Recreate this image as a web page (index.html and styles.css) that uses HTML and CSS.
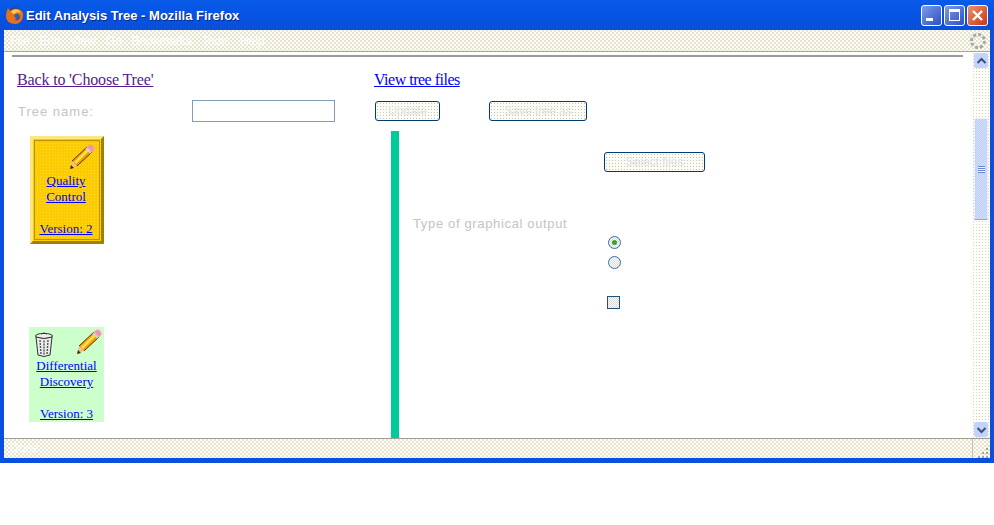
FILE: index.html
```html
<!DOCTYPE html>
<html>
<head>
	<title>Edit Analysis Tree - Mozilla Firefox</title>
	<link rel="stylesheet" href="styles.css">
</head>
<body>
	<svg width="0" height="0" class="defs">
		<symbol id="pencil" viewBox="0 0 26 26">
			<path d="M1 25l2-8 5 5z" fill="#e8c48e"/>
			<path d="M1 25l1-4 3 3z" fill="#4a2808"/>
			<path d="M3 17L18 3l5 5L8 22z" fill="#f59a10"/>
			<path d="M5 18L19 4l2 2L7 20z" fill="#ffe040"/>
			<path d="M3 17L18 3M8 22L23 8" stroke="#5a3404" stroke-width="1" fill="none"/>
			<path d="M18 3l2-2q2-1 3 0l2 2q1 2 0 3l-2 2z" fill="#f590b8"/>
			<path d="M17 4l5 5" stroke="#d0d0d0" stroke-width="2"/>
		</symbol>
	</svg>
	<div class="window">
		<div class="titlebar">
			<svg class="fox" width="18" height="18" viewBox="0 0 18 18">
				<circle cx="9" cy="9" r="8.500" fill="#2b4a94"/>
				<path d="M2 2c1 2 2 3 4 3 3-3 9-3 11 2 1 5-2 11-8 11-5 0-9-3-9-8 0-3 1-6 2-8z" fill="#e8701a"/>
				<path d="M5 5c3-3 9-2 10 2-2-1-5-1-6 1-2 0-4-1-4-3z" fill="#fbc840"/>
				<path d="M9 8c2-1 5 0 5 3s-3 4-5 3c1-1 1-2 0-3-1 0-1-2 0-3z" fill="#3a5ba8"/>
			</svg>
			<span class="title-text">Edit Analysis Tree - Mozilla Firefox</span>
			<div class="win-buttons">
				<div class="win-btn"><span class="min-glyph"></span></div>
				<div class="win-btn"><span class="max-glyph"></span></div>
				<div class="win-btn close">
					<svg width="13" height="13" viewBox="0 0 13 13"><path d="M2 2l9 9M11 2l-9 9" stroke="#fff" stroke-width="2.400"/></svg>
				</div>
			</div>
		</div>
		<div class="inner">
			<div class="menubar">
				<span>File</span><span>Edit</span><span>View</span><span>Go</span><span>Bookmarks</span><span>Tools</span><span>Help</span>
				<svg class="throbber" width="18" height="18" viewBox="0 0 18 18"><circle cx="9" cy="9" r="6.500" fill="none" stroke="#a8a8a8" stroke-width="3" stroke-dasharray="3 2"/></svg>
			</div>
			<div class="viewport">
				<div class="page">
					<hr class="rule">
					<div class="links-row">
						<a class="visited" href="#">Back to 'Choose Tree'</a>
						<a class="files" href="#">View tree files</a>
					</div>
					<div class="form-row">
						<label class="dim name-label">Tree name:</label>
						<input class="name-input" type="text">
						<button class="btn btn-update">Update</button>
						<button class="btn btn-copy">Save tree as</button>
					</div>
					<div class="lower">
						<div class="trees">
							<div class="card card-yellow">
								<div class="card-icons"><svg class="icon-pencil"><use href="#pencil"/></svg></div>
								<a href="#">Quality</a><br>
								<a href="#">Control</a>
								<div class="version"><a href="#">Version: 2</a></div>
							</div>
							<div class="card card-green">
								<div class="card-icons">
									<svg class="icon-trash" width="20" height="26" viewBox="0 0 20 26">
										<ellipse cx="10" cy="4" rx="8.500" ry="2.600" fill="#eee" stroke="#333"/>
										<path d="M7 2q3-2 6 0" fill="none" stroke="#333"/>
										<path d="M2 5l2 18q6 3 12 0l2-18q-8 3-16 0z" fill="#eaeaea" stroke="#333"/>
										<path d="M6 8l1 15M10 8.500v15M14 8l-1 15" stroke="#555" stroke-width="1.400" stroke-dasharray="2 1"/>
									</svg>
									<svg class="icon-pencil"><use href="#pencil"/></svg>
								</div>
								<a href="#">Differential</a><br>
								<a href="#">Discovery</a>
								<div class="version"><a href="#">Version: 3</a></div>
							</div>
						</div>
						<div class="divider"></div>
						<div class="options">
							<div class="opt-label dim">Type of graphical output</div>
							<div class="opt-controls">
								<button class="btn btn-select">Select files</button>
								<span class="radio checked"></span>
								<span class="radio"></span>
								<span class="check"></span>
							</div>
						</div>
					</div>
				</div>
				<div class="scrollbar">
					<div class="sb-btn"><svg width="11" height="8" viewBox="0 0 11 8"><path d="M1.500 6l4-4 4 4" fill="none" stroke="#3d4f78" stroke-width="2"/></svg></div>
					<div class="sb-track">
						<div class="sb-thumb"><span class="grip"></span></div>
					</div>
					<div class="sb-btn"><svg width="11" height="8" viewBox="0 0 11 8"><path d="M1.500 2l4 4 4-4" fill="none" stroke="#3d4f78" stroke-width="2"/></svg></div>
				</div>
			</div>
			<div class="statusbar">
				<span class="status-text">Done</span>
				<span class="status-grip"></span>
			</div>
		</div>
	</div>
</body>
</html>
```

FILE: styles.css
```css
body {
	margin: 0;
	background-color: #fff;
	font-family: "Liberation Serif", serif;
}

.defs {
	display: block;
	height: 0;
}

a {
	color: #0000ff;
}

a.visited {
	color: #551a8b;
}

.dim {
	color: #c4c4c4;
	font-family: "Liberation Sans", sans-serif;
	font-size: 13px;
}

/* window frame */
.window {
	width: 994px;
	height: 463px;
	display: flex;
	flex-direction: column;
	background-color: #0a4fe0;
	box-sizing: border-box;
	padding: 0 4px 5px 4px;
	border-radius: 6px 6px 0 0;
}

.titlebar {
	height: 30px;
	flex: none;
	display: flex;
	align-items: center;
	margin: 0 -4px;
	padding: 0 3px 0 6px;
	background: linear-gradient(#0a5be8, #0553e4 50%, #0a4fd8);
}

.fox {
	margin-right: 2px;
}

.title-text {
	color: #fff;
	font-family: "Liberation Sans", sans-serif;
	font-weight: bold;
	font-size: 13px;
	text-shadow: 1px 1px 0 #0a2a80;
}

.win-buttons {
	margin-left: auto;
	display: flex;
	gap: 2px;
	padding-right: 3px;
}

.win-btn {
	width: 19px;
	height: 19px;
	border: 1px solid #fff;
	border-radius: 3px;
	background: linear-gradient(135deg, #7f9be8, #2a50c8);
	display: flex;
	align-items: center;
	justify-content: center;
}

.win-btn.close {
	background: linear-gradient(135deg, #f09070, #c83810);
}

.min-glyph {
	width: 7px;
	height: 3px;
	background-color: #fff;
	margin: 8px 5px 0 0;
}

.max-glyph {
	width: 9px;
	height: 8px;
	border: 1px solid #fff;
	border-top-width: 3px;
}

.inner {
	flex: 1;
	min-height: 0;
	display: flex;
	flex-direction: column;
}

/* dithered chrome, the reference is a low colour capture */
.menubar {
	height: 22px;
	flex: none;
	display: flex;
	align-items: center;
	gap: 10px;
	padding-left: 6px;
	background: repeating-conic-gradient(#e6e3d0 0 25%, #fdfcf6 0 50%) 0 0 / 4px 4px;
	color: #fff;
	font-family: "Liberation Sans", sans-serif;
	font-size: 12px;
	border-bottom: 1px solid #a8a69a;
	box-sizing: border-box;
}

.throbber {
	margin-left: auto;
	margin-right: 3px;
}

.viewport {
	flex: 1;
	min-height: 0;
	display: flex;
	background-color: #fff;
}

.page {
	flex: 1;
	min-width: 0;
	display: flex;
	flex-direction: column;
	overflow: hidden;
}

.rule {
	flex: none;
	margin: 3px 9px 0 8px;
	height: 2px;
	border: 0;
	background-color: #9a9a9a;
}

.links-row {
	flex: none;
	display: flex;
	margin-top: 14px;
	padding-left: 13px;
	font-size: 16px;
	line-height: 18px;
	white-space: nowrap;
}

.links-row .visited {
	width: 357px;
	flex: none;
	letter-spacing: -0.15px;
}

.links-row .files {
	letter-spacing: -0.5px;
}

.form-row {
	flex: none;
	display: flex;
	align-items: center;
	margin-top: 11px;
	height: 22px;
	padding-left: 14px;
}

.name-label {
	width: 174px;
	flex: none;
	letter-spacing: 1px;
}

.name-input {
	width: 143px;
	height: 22px;
	box-sizing: border-box;
	border: 1px solid #7f9db9;
	background-color: #fff;
	padding: 0;
}

.btn {
	height: 20px;
	box-sizing: border-box;
	border: 1px solid #003c74;
	border-radius: 3px;
	background: #fdfcf4 radial-gradient(#c6c6c0 0.7px, transparent 0.9px) 0 0 / 3px 3px;
	color: #e2e2e2;
	font-family: "Liberation Sans", sans-serif;
	font-size: 12px;
	padding: 0;
	white-space: nowrap;
	overflow: hidden;
}

.btn-update {
	width: 65px;
	margin-left: 40px;
}

.btn-copy {
	width: 98px;
	margin-left: 49px;
}

.lower {
	flex: 1;
	min-height: 0;
	margin-top: 9px;
	display: flex;
}

.trees {
	width: 387px;
	flex: none;
	padding: 5px 0 0 25px;
	box-sizing: border-box;
}

.card {
	width: 75px;
	box-sizing: border-box;
	text-align: center;
	font-size: 13px;
	line-height: 16px;
}

.card-yellow {
	height: 108px;
	margin-left: 1px;
	width: 74px;
	background: #fccc00 radial-gradient(#ffdc3a 0.7px, transparent 0.9px) 0 0 / 3px 3px;
	border: 3px solid;
	border-color: #ffe680 #a08000 #a08000 #ffe680;
	outline: 1px solid #b89400;
	outline-offset: -5px;
	padding: 5px 2px 0 0;
}

.card-green {
	height: 95px;
	margin-top: 83px;
	background-color: #ccffcc;
	padding-top: 2px;
}

.card-icons {
	height: 29px;
	display: flex;
	justify-content: flex-end;
	padding-right: 4px;
}

.card-green .card-icons {
	padding: 0 2px 0 5px;
	justify-content: space-between;
}

.icon-trash {
	margin-top: 3px;
}

.icon-pencil {
	width: 26px;
	height: 26px;
}

.version {
	margin-top: 16px;
}

.divider {
	width: 8px;
	flex: none;
	background-color: #00cc99;
}

.options {
	flex: 1;
	display: flex;
	min-width: 0;
}

.opt-label {
	width: 191px;
	flex: none;
	margin: 85px 0 0 14px;
	height: 16px;
	line-height: 16px;
	letter-spacing: 0.65px;
	white-space: nowrap;
}

.opt-controls {
	display: flex;
	flex-direction: column;
	align-items: flex-start;
	padding-top: 21px;
}

.btn-select {
	width: 101px;
	margin-bottom: 64px;
}

.radio {
	width: 13px;
	height: 13px;
	box-sizing: border-box;
	border: 1px solid #3a6ea5;
	border-radius: 50%;
	background: repeating-conic-gradient(#dcdcd4 0 25%, #fff 0 50%) 0 0 / 2px 2px;
	margin: 0 0 7px 4px;
	display: flex;
	align-items: center;
	justify-content: center;
}

.radio.checked::after {
	content: "";
	width: 5px;
	height: 5px;
	border-radius: 50%;
	background-color: #2ea82e;
}

.check {
	width: 13px;
	height: 13px;
	box-sizing: border-box;
	border: 1px solid #1c5180;
	background: repeating-conic-gradient(#d8d8d0 0 25%, #fff 0 50%) 0 0 / 2px 2px;
	margin: 20px 0 0 3px;
}

/* scrollbar */
.scrollbar {
	width: 18px;
	flex: none;
	display: flex;
	flex-direction: column;
	background: #fffef8 radial-gradient(#d4d2c4 0.7px, transparent 0.9px) 0 0 / 3px 3px;
}

.sb-btn {
	height: 15px;
	margin: 1px 2px;
	background-color: #c2d3fc;
	border-radius: 2px;
	display: flex;
	align-items: center;
	justify-content: center;
}

.sb-track {
	flex: 1;
	padding-top: 49px;
}

.sb-thumb {
	height: 102px;
	margin: 0 2px;
	box-sizing: border-box;
	background: repeating-conic-gradient(#bcd0fa 0 25%, #d4defc 0 50%) 0 0 / 2px 2px;
	border: 1px solid #e8eefc;
	border-bottom-color: #8ea4d8;
	display: flex;
	align-items: center;
	justify-content: center;
}

.grip {
	width: 7px;
	height: 7px;
	background: repeating-linear-gradient(#6a88d0 0 1px, #eef2fd 1px 2px);
}

.statusbar {
	height: 20px;
	flex: none;
	display: flex;
	background: repeating-conic-gradient(#e6e3d0 0 25%, #fdfcf6 0 50%) 0 0 / 4px 4px;
	border-top: 1px solid #a09e92;
	box-sizing: border-box;
}

.status-text {
	flex: 1;
	padding-left: 6px;
	color: #fff;
	font-family: "Liberation Sans", sans-serif;
	font-size: 12px;
	line-height: 19px;
	border-right: 1px solid #c4c2b6;
}

.status-grip {
	width: 17px;
	flex: none;
	background: radial-gradient(#a8a69a 1px, transparent 1.500px) 0 0 / 4px 4px;
	clip-path: polygon(100% 20%, 100% 100%, 20% 100%);
}
```
